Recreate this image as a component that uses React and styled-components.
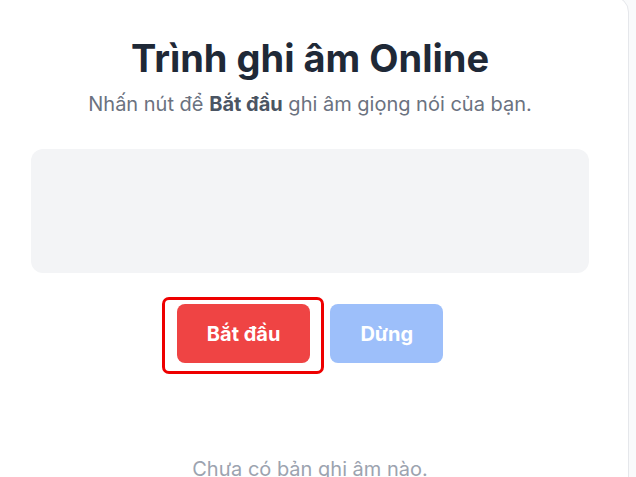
import React from 'react';
import styled, { createGlobalStyle } from 'styled-components';

const GlobalStyle = createGlobalStyle`
  html, body {
    margin: 0;
    padding: 0;
    background: #f9fafb;
    font-family: Inter, "Noto Sans", sans-serif;
    overflow: hidden;
  }
`;

const Card = styled.main`
  box-sizing: border-box;
  width: 638px;
  min-height: 520px;
  margin: -4px 0 0 -9px;
  padding: 38px 39px;
  background: #ffffff;
  border: 1px solid #e5e7eb;
  border-radius: 16px;
  display: flex;
  flex-direction: column;
  align-items: center;
`;

const Title = styled.h1`
  margin: 0;
  font-size: 38px;
  line-height: 46px;
  font-weight: 700;
  color: #1f2937;
`;

const Subtitle = styled.p`
  margin: 9px 0 0;
  font-size: 20px;
  line-height: 28px;
  color: #6b7280;

  strong {
    font-weight: 700;
    color: #4b5563;
  }
`;

const Visualizer = styled.div`
  align-self: stretch;
  height: 124px;
  margin-top: 31px;
  background: #f3f4f6;
  border-radius: 12px;
`;

const Controls = styled.div`
  display: flex;
  justify-content: center;
  gap: 20px;
  margin-top: 31px;
`;

const Highlight = styled.div`
  position: relative;

  &::after {
    content: '';
    position: absolute;
    top: -7px;
    bottom: -11px;
    left: -15px;
    right: -14px;
    border: 3px solid #ee0000;
    border-radius: 7px;
    pointer-events: none;
  }
`;

const Button = styled.button`
  height: 59px;
  padding: 0 30px;
  border: none;
  border-radius: 8px;
  font-family: inherit;
  font-size: 20px;
  font-weight: 700;
  color: #ffffff;
  background: ${({ $variant }) => ($variant === 'stop' ? '#9dbffa' : '#ef4444')};
  cursor: ${({ disabled }) => (disabled ? 'not-allowed' : 'pointer')};
`;

const EmptyNote = styled.p`
  margin: 92px 0 0;
  font-size: 20px;
  line-height: 28px;
  color: #9ca3af;
`;

const App = () => {
  return (
    <>
      <GlobalStyle />
      <Card>
        <Title>Trình ghi âm Online</Title>
        <Subtitle>
          Nhấn nút để <strong>Bắt đầu</strong> ghi âm giọng nói của bạn.
        </Subtitle>
        <Visualizer />
        <Controls>
          <Highlight>
            <Button>Bắt đầu</Button>
          </Highlight>
          <Button $variant="stop" disabled>
            Dừng
          </Button>
        </Controls>
        <EmptyNote>Chưa có bản ghi âm nào.</EmptyNote>
      </Card>
    </>
  );
};

export default App;
